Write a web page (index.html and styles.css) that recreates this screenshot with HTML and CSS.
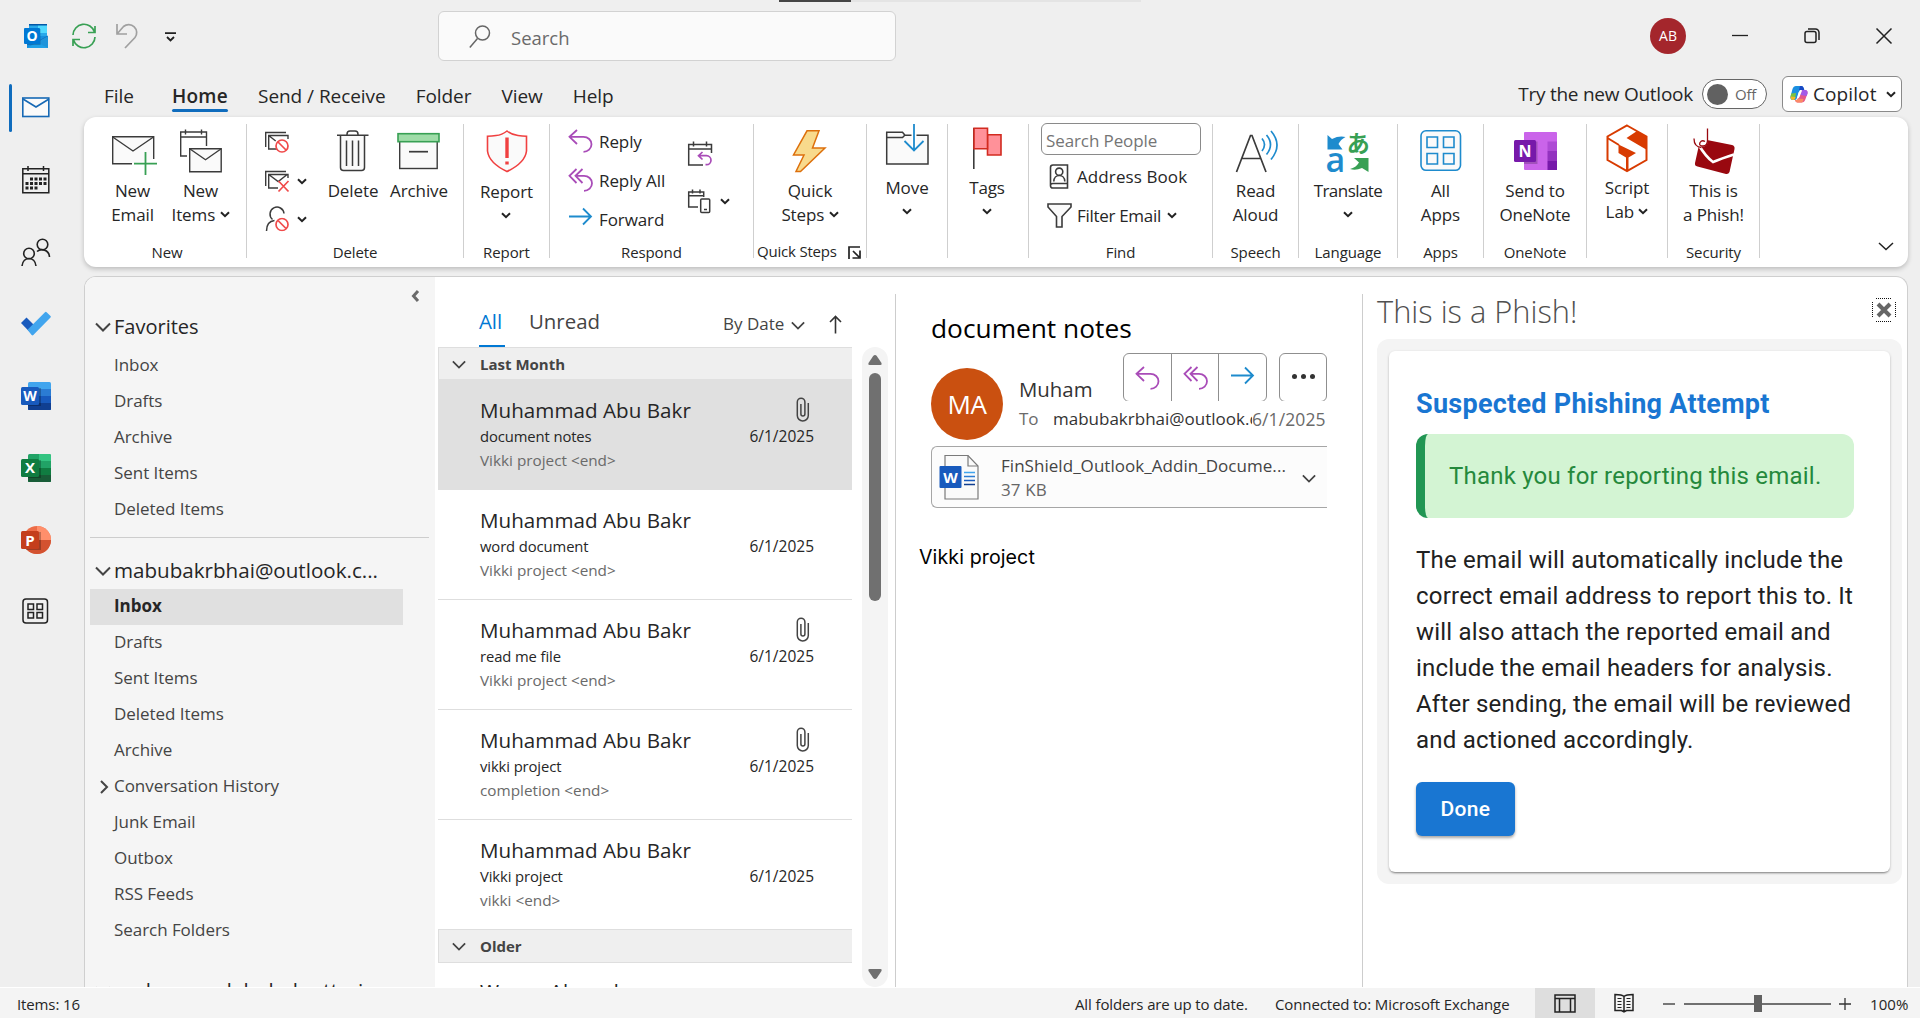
FILE: index.html
```html
<!DOCTYPE html>
<html lang="en">
<head>
<meta charset="utf-8">
<title>Inbox - Outlook</title>
<link rel="stylesheet" href="styles.css">
</head>
<body>
<svg class="defs" aria-hidden="true">
  <symbol id="chev" viewBox="0 0 10 7"><path d="M1 1.2l4 4 4-4" fill="none" stroke="currentColor" stroke-width="2"/></symbol>
  <symbol id="chev-lg" viewBox="0 0 16 10"><path d="M1 1.5l7 7 7-7" fill="none" stroke="currentColor" stroke-width="2"/></symbol>
  <symbol id="clip" viewBox="0 0 14 26"><path d="M12.3 6v12.500a5.500 5.500 0 0 1-11 0V5a3.800 3.800 0 0 1 7.600 0v12a2 2 0 0 1-4 0V7" fill="none" stroke="#444" stroke-width="1.500"/></symbol>
  <symbol id="reply" viewBox="0 0 26 24"><path d="M9 1L1.500 7.800 9 15M1.500 7.800H15.500a8 7.500 0 0 1 0 15" fill="none" stroke="#a94cb8" stroke-width="1.800"/></symbol>
  <symbol id="reply-all" viewBox="0 0 26 24"><path d="M8.500 1L1.500 7.800 8.500 15M14.500 1L7.500 7.800l7 7.200M7.500 7.800h8.500a8 7.500 0 0 1 0 15" fill="none" stroke="#a94cb8" stroke-width="1.800"/></symbol>
  <symbol id="forward" viewBox="0 0 26 24"><path d="M1 9.500h22M15 1.500l8 8-8 8" fill="none" stroke="#1e8bcd" stroke-width="1.800"/></symbol>
  <symbol id="block" viewBox="0 0 14 14"><circle cx="7" cy="7" r="6" fill="#fff" stroke="#f04a4a" stroke-width="1.700"/><path d="M3 3l8 8" stroke="#f04a4a" stroke-width="1.700"/></symbol>
</svg>

<header class="titlebar">
  <div class="quick">
    <svg class="qi-outlook" width="24" height="24" viewBox="0 0 24 24"><rect x="5" y="0" width="18" height="14" fill="#28a8ea"/><rect x="14" y="1" width="9" height="8" fill="#50d9ff"/><rect x="5" y="0" width="18" height="1.500" fill="#0358a7"/><path d="M3 12h21v12H3z" fill="#1490df"/><path d="M24 11.500L12.500 18 24 24z" fill="#1066b5"/><path d="M3 24l21-12v12z" fill="#28a8ea" opacity=".7"/><rect x="3" y="5" width="13.500" height="16" fill="#0a3d6e" opacity=".35"/><rect y="4" width="16" height="16" rx="1" fill="#0078d4"/><text x="8" y="17" text-anchor="middle" class="logo-letter" font-size="14">O</text></svg>
    <svg class="qi-sync" width="26" height="26" viewBox="0 0 26 26" fill="none" stroke="#38a054" stroke-width="1.700"><path d="M2 12A11 11 0 0 1 23.500 9M24 14A11 11 0 0 1 2.500 17M24 3v6.500h-7M2 23v-6.500h7"/></svg>
    <svg class="qi-undo" width="24" height="26" viewBox="0 0 24 26" fill="none" stroke="#a0a0a0" stroke-width="1.700"><path d="M2 1v10h10M2 11L8.500 3.500A8 8 0 0 1 20 14.500L10 25"/></svg>
    <svg class="qi-more" width="12" height="11" viewBox="0 0 12 11" fill="none" stroke="#222" stroke-width="1.800"><path d="M0 1.200h11M2 5l3.500 3.500L9 5"/></svg>
  </div>
  <div class="searchbox">
    <svg width="22" height="24" viewBox="0 0 22 24" fill="none" stroke="#666" stroke-width="1.500"><circle cx="13.500" cy="8" r="7"/><path d="M8.500 13.500L.8 22.500"/></svg>
    <span>Search</span>
  </div>
  <div class="top-edge"><i></i><b></b></div>
  <div class="window-controls">
    <span class="account">AB</span>
    <svg width="16" height="16" viewBox="0 0 16 16" fill="none" stroke="#222" stroke-width="1.300"><path d="M0 7.500h16"/></svg>
    <svg width="16" height="16" viewBox="0 0 16 16" fill="none" stroke="#222" stroke-width="1.500"><rect x="1" y="3.500" width="11" height="11" rx="2"/><path d="M4 1h7.500a3.500 3.500 0 0 1 3.500 3.500v7.500"/></svg>
    <svg width="16" height="16" viewBox="0 0 16 16" fill="none" stroke="#222" stroke-width="1.500"><path d="M.5.5l15 15M15.500.5l-15 15"/></svg>
  </div>
</header>

<div class="shell">
  <nav class="rail">
    <span class="rail-item active"><svg width="30" height="24" viewBox="0 0 30 24" fill="none" stroke="#1769b5" stroke-width="1.600"><rect x="1.800" y="2" width="26" height="18.500" fill="#fafafa"/><path d="M2 3l13 8 13-8"/></svg></span>
    <span class="rail-item"><svg width="30" height="28" viewBox="0 0 30 28" fill="none" stroke="#222" stroke-width="1.500"><path d="M1.800 2.800h26v24h-26zM1.800 7.800h26M7 0v5M22.500 0v5"/><path d="M9 13h18M4.500 17.500H27M4.500 22H18" stroke-width="3" stroke-dasharray="3 1.500"/></svg></span>
    <span class="rail-item"><svg width="30" height="30" viewBox="0 0 30 30" fill="none" stroke="#222" stroke-width="1.600"><circle cx="21.500" cy="7.500" r="5.300"/><circle cx="8" cy="16.500" r="5.300"/><path d="M1 29c1-10 13-10 14 0M16 14.500c4-3.500 12-2 12.500 5.500"/></svg></span>
    <span class="rail-item"><svg width="30" height="26" viewBox="0 0 30 26"><path d="M0 12l5.500-5.500L17 18l-5.500 6z" fill="#185abd"/><path d="M6.500 18.800L24 1.200q.8-.8 1.600 0L29.500 5q.8.800 0 1.600L12.300 24q-.8.800-1.600 0z" fill="#41a5ee"/></svg></span>
    <span class="rail-item"><svg width="30" height="28" viewBox="0 0 30 28"><rect x="7" width="23" height="28" rx="1.500" fill="#41a5ee"/><path d="M7 7h23v19.500q0 1.500-1.500 1.500H8.500Q7 28 7 26.500z" fill="#2b7cd3"/><path d="M7 14h23v12.500q0 1.500-1.500 1.500H8.500Q7 28 7 26.500z" fill="#185abd"/><path d="M7 21h23v5.500q0 1.500-1.500 1.500H8.500Q7 28 7 26.500z" fill="#103f91"/><rect x="7" y="6" width="13" height="18" fill="#000" opacity=".25"/><rect y="5" width="18" height="18" rx="1.500" fill="#185abd"/><text x="9" y="19" text-anchor="middle" class="logo-letter" font-size="14">W</text></svg></span>
    <span class="rail-item"><svg width="30" height="28" viewBox="0 0 30 28"><rect x="7" width="23" height="28" rx="1.500" fill="#21a366"/><path d="M18 0h10.500Q30 0 30 1.500V7H18z" fill="#33c481"/><path d="M7 14h23v12.500q0 1.500-1.500 1.500H8.500Q7 28 7 26.500z" fill="#107c41"/><path d="M7 21h23v5.500q0 1.500-1.500 1.500H8.500Q7 28 7 26.500z" fill="#185c37"/><rect x="7" y="6" width="13" height="18" fill="#000" opacity=".25"/><rect y="5" width="18" height="18" rx="1.500" fill="#107c41"/><text x="9" y="19" text-anchor="middle" class="logo-letter" font-size="15">X</text></svg></span>
    <span class="rail-item"><svg width="30" height="28" viewBox="0 0 30 28"><circle cx="16" cy="14" r="14" fill="#ed6c47"/><path d="M16 0a14 14 0 0 1 14 14H16z" fill="#ff8f6b"/><path d="M30 14a14 14 0 0 1-28 0z" fill="#d35230"/><rect x="5" y="6" width="15" height="18" fill="#000" opacity=".25"/><rect y="5" width="18" height="18" rx="1.500" fill="#c43e1c"/><text x="9" y="19.500" text-anchor="middle" class="logo-letter" font-size="15">P</text></svg></span>
    <span class="rail-item"><svg width="30" height="28" viewBox="0 0 30 28" fill="none" stroke="#222" stroke-width="1.500"><rect x="2" y="2" width="24.500" height="24" rx="3"/><path d="M7 7h5.500v5.500H7zM16 7h5.500v5.500H16zM7 15.500h5.500V21H7zM16 15.500h5.500V21H16z"/></svg></span>
  </nav>

  <div class="workspace">
    <div class="tabs">
      <span>File</span><span class="current">Home</span><span>Send / Receive</span><span>Folder</span><span>View</span><span>Help</span>
      <div class="tabs-right">
        <span class="try">Try the new Outlook</span>
        <span class="toggle"><i></i>Off</span>
        <button class="copilot"><svg width="18" height="18" viewBox="0 0 18 18"><path d="M6 1h5q2 0 2.600 2l.6 2H10L6.500 14Q6 15 4.500 15H3Q0 15 .5 11.500L2.500 4Q3.500 1 6 1z" fill="#1b8fe0"/><path d="M10 1h1.500q1.700 0 2.200 2l.6 2H9z" fill="#1748c4"/><path d="M1.200 8.500L6 8l-1 6.500Q2 15.500.8 13.500.2 12 1.200 8.500z" fill="#7cc240"/><path d="M.6 11.500l5 .5q-.6 3-2 3Q.5 15.500.6 11.500z" fill="#f2b728"/><path d="M12 5h3q3 0 2.500 3.500L15.500 14q-1 3.500-4 3.500H7.500q-2 0-2.500-2.500h1.500q1 0 1.500-1.500z" fill="#e6578a"/><path d="M12 5h3q3 0 2.500 3.500l-.8 2.500-6.200-1z" fill="#a35ae8"/><path d="M7.500 13.500l6 .5q-.5 3.500-2 3.500h-4q-1.500 0-2.500-2.500h1.500q.6 0 1-1.500z" fill="#fb8a66"/><path d="M8.500 7.500l1.500-2h2l-2.500 6.500-1.500 1.500-1-.5z" fill="#fff"/></svg>Copilot<svg class="cv" width="10" height="7"><use href="#chev"/></svg></button>
      </div>
    </div>

    <section class="ribbon">
      <div class="group g-new">
        <div class="tools">
          <div class="big"><svg width="48" height="54" viewBox="0 0 48 54" fill="none" stroke="#3b3b3b" stroke-width="1.400"><path d="M23 39.700H3.700V12.700h41V35" fill="#fafafa"/><path d="M3.700 13L24 27l20.500-14"/><path d="M36.500 28v23M25 39.700h23" stroke="#38a054" stroke-width="1.800"/></svg><span>New<br>Email</span></div>
          <div class="big"><svg width="48" height="54" viewBox="0 0 48 54" fill="none" stroke="#3b3b3b" stroke-width="1.400"><path d="M10 32H3.700V8H29.500V22M3.700 13H29.500M8.500 5.500v5M24.500 5.500v5"/><path d="M12.700 24.700h31.500v23H12.700z" fill="#fafafa"/><path d="M12.700 24.700l15.800 11 15.700-11"/></svg><span>New<br>Items <svg class="cv" width="10" height="7"><use href="#chev"/></svg></span></div>
        </div>
        <div class="caption">New</div>
      </div>
      <div class="group g-delete">
        <div class="tools">
          <div class="minis">
            <div><svg width="26" height="24" viewBox="0 0 26 24" fill="none" stroke="#3b3b3b" stroke-width="1.400"><path d="M1.700 17V2.500H22M13 19H4.700V5.500H24V9M4.700 5.500l7 5.500"/><use href="#block" x="11" y="9" width="14" height="14"/></svg></div>
            <div><svg width="26" height="24" viewBox="0 0 26 24" fill="none" stroke="#3b3b3b" stroke-width="1.400"><path d="M1.700 17V2.500H22M14 19H4.700V5.500H24V9M4.700 5.500l9.500 7 9-7"/><path d="M14.500 12l10 10.500M24.500 12l-10 10.500" stroke="#f04a4a" stroke-width="1.700"/></svg><svg class="cv" width="10" height="7"><use href="#chev"/></svg></div>
            <div><svg width="26" height="24" viewBox="0 0 26 24" fill="none" stroke="#3b3b3b" stroke-width="1.500"><path d="M8.500 12.500A7 7 0 1 1 20 6.500M2.500 24C2.500 16.500 6 14 10.500 13.500"/><use href="#block" x="11" y="10.500" width="14" height="14"/></svg><svg class="cv" width="10" height="7"><use href="#chev"/></svg></div>
          </div>
          <div class="big"><svg width="48" height="54" viewBox="0 0 48 54" fill="none" stroke="#3b3b3b" stroke-width="1.500"><path d="M11.500 11.500v32a3 3 0 0 0 3 3h18a3 3 0 0 0 3-3v-32" fill="#fafafa"/><path d="M8 11.200h31.500M18 11v-.8q0-3.200 3-3.200h5q3 0 3 3.200v.8M17.500 16.500V42M23.500 16.500V42M29.500 16.500V42"/></svg><span>Delete</span></div>
          <div class="big"><svg width="48" height="54" viewBox="0 0 48 54" fill="none" stroke="#3b3b3b" stroke-width="1.400"><rect x="4.700" y="17" width="37.500" height="27.500" fill="#fafafa"/><rect x="3" y="9.700" width="41" height="8" fill="#9fdca8" stroke="#38a054" stroke-width="1.600"/><path d="M14 27.700h19" stroke-width="1.700"/></svg><span>Archive</span></div>
        </div>
        <div class="caption">Delete</div>
      </div>
      <div class="group g-report">
        <div class="tools">
          <div class="big"><svg width="48" height="54" viewBox="0 0 48 54" fill="none" stroke="#f04040" stroke-width="1.600"><path d="M24 7q-5 4-11 4.500-4 .5-8.500.8V27Q6 39 24 47.500 42 39 43.500 27V12.300q-4.500-.3-8.500-.8Q29 11 24 7z" fill="#fafafa"/><path d="M24 13.500V34M24 37.500v3" stroke-width="3.400"/></svg><span class="low">Report<br><svg class="cv" width="10" height="7"><use href="#chev"/></svg></span></div>
        </div>
        <div class="caption">Report</div>
      </div>
      <div class="group g-respond">
        <div class="tools">
          <div class="rows">
            <div><svg width="26" height="24"><use href="#reply"/></svg>Reply</div>
            <div><svg width="26" height="24"><use href="#reply-all"/></svg>Reply All</div>
            <div><svg width="26" height="24"><use href="#forward"/></svg>Forward</div>
          </div>
          <div class="respond-side">
            <div><svg width="26" height="26" viewBox="0 0 26 26" fill="none" stroke="#3b3b3b" stroke-width="1.500"><path d="M16 24H1.700V3.500H24.500V12M1.700 8H24.500M6.500.5v5M19.500.5v5" /><path d="M15.500 11l-4 3.700 4 3.800M11.500 14.700h8a4.500 4.500 0 0 1 0 9h-1" stroke="#a94cb8" stroke-width="1.700"/></svg></div>
            <div><svg width="26" height="26" viewBox="0 0 26 26" fill="none" stroke="#3b3b3b" stroke-width="1.500"><path d="M11 18H1.700V3H16.700V8M1.700 6.700H16.700M5.500.5v4M13 .5v4"/><rect x="13.700" y="10" width="9" height="13.500" rx="1"/><path d="M17 20.500h3"/></svg><svg class="cv" width="10" height="7"><use href="#chev"/></svg></div>
          </div>
        </div>
        <div class="caption">Respond</div>
      </div>
      <div class="group g-quick">
        <div class="tools">
          <div class="big"><svg width="48" height="54" viewBox="0 0 48 54"><path d="M21 6.800h12L26.500 24H39L14.500 47.500H10L18 31H7.500z" fill="#f8da8c" stroke="#dd700c" stroke-width="1.500"/></svg><span>Quick<br>Steps <svg class="cv" width="10" height="7"><use href="#chev"/></svg></span></div>
        </div>
        <div class="caption">Quick Steps<svg class="launcher" width="13" height="13" viewBox="0 0 13 13" fill="none" stroke="#222" stroke-width="1.700"><path d="M1 13V1h11M5 5l6 6M12 4.500V12H4.500"/></svg></div>
      </div>
      <div class="group g-move">
        <div class="tools">
          <div class="big up"><svg width="48" height="54" viewBox="0 0 48 54" fill="none" stroke="#3b3b3b" stroke-width="1.500"><path d="M3.700 40V8.200H19.500L22 11.200H45V40z" fill="#fafafa"/><path d="M3.700 13.500H19.500L22 11"/><path d="M31 0v27" stroke="#fff" stroke-width="5"/><path d="M31 0v26.500M21.500 17l9.500 9.500 9.500-9.500" stroke="#1e8bcd" stroke-width="1.800"/></svg><span>Move<br><svg class="cv" width="10" height="7"><use href="#chev"/></svg></span></div>
        </div>
      </div>
      <div class="group g-tags">
        <div class="tools">
          <div class="big up"><svg width="48" height="54" viewBox="0 0 48 54"><path d="M10.800 4v41" stroke="#3b3b3b" stroke-width="1.600"/><path d="M24.500 10.700H38V31H24.500z" fill="#ff9199" stroke="#d22b20" stroke-width="1.600"/><path d="M11 4.200h13.500v20.500H11z" fill="#ff9199" stroke="#d22b20" stroke-width="1.600"/></svg><span>Tags<br><svg class="cv" width="10" height="7"><use href="#chev"/></svg></span></div>
        </div>
      </div>
      <div class="group g-find">
        <div class="people">Search People</div>
        <div class="rows find-rows">
          <div><svg width="26" height="26" viewBox="0 0 26 26" fill="none" stroke="#3b3b3b" stroke-width="1.600"><path d="M20.500 19.500v4.500H6q-2.500 0-2.500-2.300V3.500Q3.500 1 6 1h14.500v18.500H6q-2.500 0-2.500 2"/><circle cx="12.200" cy="7.700" r="3.600"/><path d="M6.800 17.500c0-8 11-8 11 0"/></svg>Address Book</div>
          <div><svg width="26" height="26" viewBox="0 0 26 26" fill="#fafafa" stroke="#3b3b3b" stroke-width="1.600"><path d="M1 1h23v3l-9 9.500V24H9.500V13.500L1 4z"/></svg>Filter Email<svg class="cv" width="10" height="7"><use href="#chev"/></svg></div>
        </div>
        <div class="caption">Find</div>
      </div>
      <div class="group g-speech">
        <div class="tools">
          <div class="big"><svg width="48" height="54" viewBox="0 0 48 54" fill="none" stroke="#3b3b3b" stroke-width="1.700"><path d="M4.500 48L18.500 11.500h1.500L34 48M9.500 34.500H29"/><path d="M30 14.500q5 6 0 12.500M34.500 11q8 9.500 0 19.500M39 7q12 14 0 28.500" stroke="#1e8bcd"/></svg><span>Read<br>Aloud</span></div>
        </div>
        <div class="caption">Speech</div>
      </div>
      <div class="group g-lang">
        <div class="tools">
          <div class="big"><svg width="48" height="54" viewBox="0 0 48 54"><path d="M3.500 11L8 15q7-3.500 13.500-2-5 2.500-7 7l4 5.500H3.500z" fill="#1e8bcd"/><path d="M44.500 48V34H30l5 4.500q-3 5-9 6.500 5.500 2 12-1z" fill="#38a054"/><text x="11" y="47.500" text-anchor="middle" class="tr-a">a</text><text x="34" y="28" text-anchor="middle" class="tr-ja">あ</text></svg><span>Translate<br><svg class="cv" width="10" height="7"><use href="#chev"/></svg></span></div>
        </div>
        <div class="caption">Language</div>
      </div>
      <div class="group g-apps">
        <div class="tools">
          <div class="big"><svg width="48" height="54" viewBox="0 0 48 54" fill="#fafafa" stroke="#1e8bcd" stroke-width="1.600"><rect x="4" y="6.800" width="39.500" height="39.500" rx="5"/><path d="M10 13h10.500v10.500H10zM26.500 13H37v10.500H26.500zM10 29.500h10.500V40H10zM26.500 29.500H37V40H26.500z"/></svg><span>All<br>Apps</span></div>
        </div>
        <div class="caption">Apps</div>
      </div>
      <div class="group g-onenote">
        <div class="tools">
          <div class="big"><svg width="48" height="54" viewBox="0 0 48 54"><rect x="13" y="8" width="33" height="38" rx="1" fill="#ca64ea"/><path d="M36.500 17.500H46v9.500h-9.500z" fill="#ae4bd5"/><path d="M36.500 27H46v10h-9.500z" fill="#9332bf"/><path d="M36.500 37H46v9h-9.500z" fill="#7719aa"/><rect x="13" y="17.500" width="13.500" height="22.500" fill="#000" opacity=".2"/><rect x="3" y="16" width="22" height="22" rx="1.500" fill="#7719aa"/><text x="14" y="32.500" text-anchor="middle" class="logo-letter" font-size="16">N</text></svg><span>Send to<br>OneNote</span></div>
        </div>
        <div class="caption">OneNote</div>
      </div>
      <div class="group g-script">
        <div class="tools">
          <div class="big up"><svg width="48" height="54" viewBox="0 0 48 54" fill="#d83b01"><path d="M24 1.500L43.500 12.500v23.500L24 47 4.500 36V12.500z" fill="#fff" stroke="#d83b01" stroke-width="2"/><path d="M34 7L44 12.500V26L23.500 14zM15.500 20.500v8.500l7.500 4.500V47h2.500V33.500l7.500-4.500z"/><path d="M4.500 14L16 21" stroke="#d83b01" stroke-width="2"/></svg><span>Script<br>Lab <svg class="cv" width="10" height="7"><use href="#chev"/></svg></span></div>
        </div>
      </div>
      <div class="group g-security">
        <div class="tools">
          <div class="big"><svg width="48" height="54" viewBox="0 0 48 54"><path d="M17 16L42 21q3 .8 2.500 4L39.500 48q-1 2.500-3.500 2L7.500 42.500Q4.500 42 5 39L9 21z" fill="#99080f"/><path d="M8.500 20.500q7 12 14.500 17.500 7-3 21-7.500" fill="none" stroke="#fff" stroke-width="2.600"/><circle cx="13" cy="18" r="4.500" fill="#fff"/><path d="M17.500 4.500V16q0 6-4.500 6t-3-3.500q2-3 5-1M4 14.500q0 8.500 7.500 9" fill="none" stroke="#99080f" stroke-width="1.300"/></svg><span>This is<br>a Phish!</span></div>
        </div>
        <div class="caption">Security</div>
      </div>
      <svg class="collapse" width="16" height="9" viewBox="0 0 16 9" fill="none" stroke="#222" stroke-width="1.500"><path d="M1 1l7 6.500L15 1"/></svg>
    </section>

    <main class="panes">
      <aside class="folders">
        <svg class="fold" width="8" height="12" viewBox="0 0 8 12" fill="none" stroke="#6a6a6a" stroke-width="3"><path d="M7 1L2.500 6 7 11"/></svg>
        <h2><svg width="16" height="10"><use href="#chev-lg"/></svg>Favorites</h2>
        <ul><li>Inbox</li><li>Drafts</li><li>Archive</li><li>Sent Items</li><li>Deleted Items</li></ul>
        <hr>
        <h2 class="acct"><svg width="16" height="10"><use href="#chev-lg"/></svg>mabubakrbhai@outlook.c...</h2>
        <ul><li class="sel">Inbox</li><li>Drafts</li><li>Sent Items</li><li>Deleted Items</li><li>Archive</li><li><svg class="side-chev" width="9" height="14" viewBox="0 0 9 14" fill="none" stroke="#444" stroke-width="2"><path d="M1 1l6 6-6 6"/></svg>Conversation History</li><li>Junk Email</li><li>Outbox</li><li>RSS Feeds</li><li>Search Folders</li></ul>
        <h2 class="acct next"><svg width="16" height="10"><use href="#chev-lg"/></svg>muhammadabubakrattari...</h2>
      </aside>

      <section class="list">
        <div class="list-head">
          <span class="f-all">All</span><span class="f-unread">Unread</span>
          <span class="sort">By Date<svg width="14" height="9" viewBox="0 0 16 10"><use href="#chev-lg"/></svg></span>
          <svg class="dir" width="13" height="19" viewBox="0 0 13 19" fill="none" stroke="#333" stroke-width="1.600"><path d="M6.500 18.500V1.500M1 7l5.500-5.500L12 7"/></svg>
        </div>
        <div class="list-body">
          <div class="msgs">
            <div class="divider-row"><svg width="14" height="9" viewBox="0 0 16 10"><use href="#chev-lg"/></svg>Last Month</div>
            <article class="msg chosen"><h3>Muhammad Abu Bakr</h3><svg width="14" height="26"><use href="#clip"/></svg><p>document notes</p><time>6/1/2025</time><small>Vikki project &lt;end&gt;</small></article>
            <article class="msg"><h3>Muhammad Abu Bakr</h3><p>word document</p><time>6/1/2025</time><small>Vikki project &lt;end&gt;</small></article>
            <article class="msg"><h3>Muhammad Abu Bakr</h3><svg width="14" height="26"><use href="#clip"/></svg><p>read me file</p><time>6/1/2025</time><small>Vikki project &lt;end&gt;</small></article>
            <article class="msg"><h3>Muhammad Abu Bakr</h3><svg width="14" height="26"><use href="#clip"/></svg><p>vikki project</p><time>6/1/2025</time><small>completion &lt;end&gt;</small></article>
            <article class="msg last"><h3>Muhammad Abu Bakr</h3><p>Vikki project</p><time>6/1/2025</time><small>vikki &lt;end&gt;</small></article>
            <div class="divider-row older"><svg width="14" height="9" viewBox="0 0 16 10"><use href="#chev-lg"/></svg>Older</div>
            <article class="msg partial"><h3>Waqas Ahmed</h3></article>
          </div>
          <div class="scroll"><svg width="14" height="10" viewBox="0 0 14 10"><path d="M7 0q1 0 1.800 1L13.500 8q.8 2-1 2h-11q-1.800 0-1-2L5.200 1Q6 0 7 0z" fill="#707070"/></svg><i></i><svg class="down" width="14" height="10" viewBox="0 0 14 10"><path d="M7 10q-1 0-1.800-1L.5 2q-.8-2 1-2h11q1.800 0 1 2L8.800 9Q8 10 7 10z" fill="#707070"/></svg></div>
        </div>
      </section>

      <section class="reading">
        <h1>document notes</h1>
        <div class="sender">
          <span class="avatar">MA</span>
          <div class="who">
            <div class="who-top">
              <span class="name">Muham</span>
              <span class="actions"><b><svg width="26" height="24"><use href="#reply"/></svg></b><b><svg width="26" height="24"><use href="#reply-all"/></svg></b><b><svg class="fw" width="26" height="24"><use href="#forward"/></svg></b></span>
              <span class="more"><i></i><i></i><i></i></span>
            </div>
            <div class="to"><span>To</span><em>mabubakrbhai@outlook.com</em><time>6/1/2025</time></div>
          </div>
        </div>
        <div class="attach">
          <svg width="40" height="46" viewBox="0 0 40 46"><path d="M6 1.500h23l10 10.500v33H6z" fill="#fafafa" stroke="#7a7a7a" stroke-width="1.200"/><path d="M29 1.500V12h10" fill="none" stroke="#7a7a7a" stroke-width="1.200"/><rect x=".5" y="12" width="22" height="22" rx="1" fill="#185abd"/><text x="11.500" y="28.500" text-anchor="middle" class="logo-letter" font-size="15">W</text><path d="M25 18.500h11" stroke="#41a5ee" stroke-width="1.300"/><path d="M25 22.500h11" stroke="#2b7cd3" stroke-width="1.300"/><path d="M25 26.500h11" stroke="#185abd" stroke-width="1.300"/><path d="M25 30.500h11" stroke="#103f91" stroke-width="1.300"/></svg>
          <div>FinShield_Outlook_Addin_Docume...<br><span>37 KB</span></div>
          <svg class="drop" width="14" height="9" viewBox="0 0 16 10"><use href="#chev-lg"/></svg>
        </div>
        <p class="body">Vikki project</p>
      </section>

      <aside class="addin">
        <header><span>This is a Phish!</span><svg width="24" height="24" viewBox="0 0 24 24" fill="none"><path d="M4 .5h16M4 23.500h16M.5 4v16M23.500 4v16" stroke="#111" stroke-dasharray="1 1"/><path d="M6 6l12 12M18 6L6 18" stroke="#666" stroke-width="4"/></svg></header>
        <div class="frame">
          <div class="card">
            <h4>Suspected Phishing Attempt</h4>
            <div class="thanks">Thank you for reporting this email.</div>
            <p>The email will automatically include the<br>correct email address to report this to. It<br>will also attach the reported email and<br>include the email headers for analysis.<br>After sending, the email will be reviewed<br>and actioned accordingly.</p>
            <button>Done</button>
          </div>
        </div>
      </aside>
    </main>
  </div>
</div>

<footer class="status">
  <span class="items">Items: 16</span>
  <span class="uptodate">All folders are up to date.</span>
  <span class="conn">Connected to: Microsoft Exchange</span>
  <span class="view"><svg width="22" height="19" viewBox="0 0 22 19" fill="none" stroke="#222" stroke-width="1.500"><path d="M1 1h20v17H1zM1 4.500h20M5.500 4.500V18M16.500 4.500V18"/></svg></span>
  <svg class="book" width="20" height="20" viewBox="0 0 20 20" fill="none" stroke="#222" stroke-width="1.500"><path d="M10 3.500Q8 1.500 1 1.500v16h6.500L10 19l2.500-1.500H19v-16q-7 0-9 2zM10 3.500V19"/><path d="M3.500 5.500h4M3.500 8.500h4M3.500 11.500h4M3.500 14.500h4M12.500 5.500h4M12.500 8.500h4M12.500 11.500h4M12.500 14.500h4" stroke-width="1.200"/></svg>
  <svg class="minus" width="12" height="12" viewBox="0 0 12 12" stroke="#333" stroke-width="1.300"><path d="M0 6h12"/></svg>
  <span class="zoom"><i></i></span>
  <svg class="plus" width="12" height="12" viewBox="0 0 12 12" stroke="#333" stroke-width="1.300"><path d="M0 6h12M6 0v12"/></svg>
  <span class="pct">100%</span>
</footer>
</body>
</html>
```
FILE: styles.css
```css
* { box-sizing: border-box; }
body {
  margin: 0; width: 1920px; height: 1018px; overflow: hidden;
  display: flex; flex-direction: column;
  background: #efefef; color: #262626;
  font: 17px/24px "Open Sans", "Noto Sans CJK JP", sans-serif;
}
svg { display: block; flex: none; overflow: visible; }
.defs { position: absolute; width: 0; height: 0; }
h1, h2, h3, h4, p, ul { margin: 0; padding: 0; font-weight: 400; list-style: none; }
.cv { display: inline-block; color: #222; }
.logo-letter { font-family: "Open Sans", sans-serif; font-weight: 700; fill: #fff; stroke: none; }

/* title bar */
.titlebar { height: 72px; flex: none; display: flex; align-items: flex-start; position: relative; }
.quick { width: 438px; display: flex; padding: 23px 0 0 24px; }
.qi-outlook { margin-top: 1px; }
.qi-sync { margin-left: 23px; }
.qi-undo { margin-left: 18px; }
.qi-more { margin: 9px 0 0 26px; }
.searchbox {
  width: 458px; height: 50px; margin-top: 11px; padding: 0 0 0 30px;
  display: flex; align-items: center; gap: 20px;
  background: #fafafa; border: 1px solid #d2d2d2; border-radius: 6px;
  font-size: 18.500px; color: #6a6a6a;
}
.searchbox svg { margin-top: 2px; }
.searchbox span { padding-top: 3px; }
.top-edge { position: absolute; left: 779px; top: 0; display: flex; height: 2px; }
.top-edge i { width: 72px; background: #454545; }
.top-edge b { width: 290px; background: #e4e4e4; }
.window-controls { margin: 18px 28px 0 auto; display: flex; align-items: center; gap: 56px; }
.account {
  width: 36px; height: 36px; margin-right: -10px; border-radius: 50%;
  background: #a4262c; color: #fff; font-size: 14px; line-height: 36px; text-align: center;
}

.shell { height: 915px; display: flex; }

/* app rail */
.rail { width: 84px; display: grid; grid-template-rows: repeat(8, 72px); padding-left: 21px; flex: none; }
.rail-item { display: flex; align-items: center; position: relative; }
.rail-item:last-child { padding-bottom: 2px; }
.active::before { content: ""; position: absolute; left: -12px; top: 12px; width: 3px; height: 48px; border-radius: 2px; background: #0f6cbd; }

.workspace { width: 1836px; display: flex; flex-direction: column; }

/* tab strip */
.tabs { height: 45px; flex: none; display: flex; padding-left: 20px; font-size: 19px; line-height: 48px; letter-spacing: -.05px; }
.tabs > span { margin-right: 30px; }
.tabs > span:nth-child(2) { margin-left: 8px; }
.tabs > span:nth-child(5) { margin-right: 30px; }
.current { font-weight: 600; position: relative; letter-spacing: .3px; }
.current::after { content: ""; position: absolute; left: 0; right: 0; top: 37px; height: 3px; border-radius: 2px; background: #0f6cbd; }
.tabs-right { margin-left: auto; display: flex; padding-right: 18px; line-height: 45px; }
.try { letter-spacing: -.25px; }
.toggle {
  width: 65px; height: 30px; margin: 7px 15px 0 9px; padding-left: 4px;
  display: flex; align-items: center; gap: 7px; border: 1px solid #666; border-radius: 16px;
  background: #fff; color: #666; font-size: 15px; line-height: 20px; letter-spacing: -.2px;
}
.toggle i { width: 21px; height: 21px; border-radius: 50%; background: #616161; }
.copilot {
  width: 120px; height: 36px; margin-top: 4px; padding: 0 0 0 7px; display: flex; align-items: center;
  border: 1px solid #8a8a8a; border-radius: 6px; background: #fff; color: #262626;
  font: 19px "Open Sans", sans-serif; letter-spacing: .1px;
}
.copilot > svg:first-child { margin-right: 5px; }
.copilot .cv { margin-left: 9px; }

/* ribbon */
.ribbon {
  width: 1824px; height: 150px; flex: none; display: flex; padding-top: 7px; position: relative; z-index: 1;
  background: #fff; border-radius: 12px; box-shadow: 0 2px 5px rgba(0,0,0,.22);
}
.group { height: 142px; flex: none; position: relative; display: flex; flex-direction: column; }
.group::after { content: ""; position: absolute; right: 0; top: 0; width: 1px; height: 134px; background: #cfcfcf; }
.tools { display: flex; height: 117px; justify-content: center; padding-right: 1px; }
.caption { font-size: 15px; line-height: 22px; text-align: center; letter-spacing: -.1px; padding-right: 1px; }
.big { width: 68px; display: flex; flex-direction: column; align-items: center; text-align: center; white-space: nowrap; letter-spacing: -.1px; }
.big span { margin-top: 1px; }
.big span .cv { margin: 0 0 3px 2px; }
.big br + .cv { margin-left: 0; }
.big.up span { margin-top: -2px; }
.big .low { margin-top: 2px; }
.g-new { width: 163px; }
.g-new .tools { padding: 0 0 0 2px; }
.g-new .caption { padding: 0 0 0 3px; }
.g-delete { width: 217px; }
.g-delete .tools { justify-content: flex-start; padding-left: 17px; }
.g-delete .big:nth-child(2) { margin-left: 15px; width: 60px; }
.g-delete .big:nth-child(3) { margin-left: 0; width: 72px; }
.minis { width: 44px; padding-top: 6px; display: grid; grid-template-rows: repeat(3, 38.500px); }
.minis div { display: flex; gap: 7px; }
.minis .cv { margin-top: 9px; }
.g-report { width: 86px; }
.g-respond { width: 204px; }
.g-respond .tools { justify-content: flex-start; padding-left: 18px; }
.g-respond .caption { text-align: left; padding-left: 71px; }
.rows { display: grid; grid-template-rows: repeat(3, 39px); padding-top: 6px; width: 119px; letter-spacing: -.1px; white-space: nowrap; }
.rows > div { display: flex; gap: 5px; }
.rows > div > svg:first-child { margin-top: -1px; }
.respond-side { padding-top: 17px; display: grid; grid-template-rows: 48px 30px; }
.respond-side > div { display: flex; gap: 7px; }
.respond-side .cv { margin-top: 9px; }
.g-quick { width: 113px; }
.g-quick .caption { display: flex; padding-left: 3px; letter-spacing: -.2px; line-height: 21px; }
.launcher { margin: 5px 0 0 11px; }
.g-move, .g-tags { width: 81px; }
.g-tags .tools { padding-right: 3px; }
.g-find { width: 184px; }
.people {
  width: 160px; height: 32px; margin: -1px 0 0 12px; padding-left: 4px; border: 1px solid #8a8a8a; border-radius: 6px;
  color: #757575; line-height: 34px; letter-spacing: -.1px; flex: none;
}
.find-rows { width: 170px; height: 86px; grid-template-rows: 39px 37px; padding: 10px 0 0 18px; letter-spacing: .1px; }
.find-rows > div { gap: 4px; }
.find-rows > div:nth-child(2) { letter-spacing: -.3px; }
.find-rows .cv { margin: 8px 0 0 2px; }
.g-speech { width: 86px; }
.g-lang { width: 99px; }
.g-lang .big { letter-spacing: -.55px; }
.g-apps { width: 86px; }
.g-onenote { width: 103px; }
.g-script { width: 81px; }
.g-security { width: 92px; }
.collapse { position: absolute; right: 14px; top: 125px; }
.tr-a { font: 600 34px "Open Sans", sans-serif; fill: #1e8bcd; }
.tr-ja { font: 700 23px "Noto Sans CJK JP", sans-serif; fill: #38a054; }

/* panes */
.panes {
  width: 1824px; height: 711px; margin-top: 9px; display: flex; flex: none; overflow: hidden;
  background: #fff; border: 1px solid #cfcfcf; border-bottom: 0; border-radius: 12px 12px 0 0;
}
.folders { width: 350px; flex: none; background: #f5f5f5; color: #444; position: relative; }
.fold { position: absolute; left: 326px; top: 13px; }
.folders h2 { display: flex; height: 42px; margin-top: 29px; padding-left: 10px; font-size: 20px; line-height: 41px; color: #262626; }
.folders h2 svg { margin: 16px 3px 0 0; color: #444; }
.folders li { height: 36px; padding-left: 29px; line-height: 34px; letter-spacing: -.05px; position: relative; }
.folders hr { margin: 9px 6px 0 5px; border: 0; height: 1px; background: #cdcdcd; }
.folders .acct { margin-top: 14px; height: 37px; font-size: 20.600px; line-height: 36px; }
.folders .acct svg { margin-top: 14px; }
.folders .next { margin-top: 23px; }
.folders .sel { margin: 0 32px 0 5px; padding-left: 24px; background: #e0e0e0; font-weight: 700; color: #262626; }
.side-chev { position: absolute; left: 15px; top: 11px; }

.list { width: 460px; flex: none; padding-left: 3px; display: flex; flex-direction: column; }
.list-head { height: 70px; display: flex; padding: 29px 0 0 41px; line-height: 31px; color: #444; }
.f-all { width: 26px; margin-right: 24px; height: 41px; font-size: 20.500px; color: #0078d4; border-bottom: 2px solid #0078d4; letter-spacing: -.1px; }
.f-unread { font-size: 20.400px; width: 194px; }
.sort { display: flex; gap: 7px; line-height: 35px; width: 108px; }
.sort svg { margin-top: 15px; }
.dir { margin-top: 9px; margin-left: -2px; }
.list-body { display: flex; height: 640px; flex: none; }
.msgs { width: 414px; overflow: hidden; flex: none; }
.divider-row {
  height: 32px; display: flex; align-items: center; gap: 14px; padding: 1px 0 0 13px; border: 1px solid #dedede; border-width: 1px 0 0 1px;
  background: #efefef; color: #444; font-weight: 700; font-size: 15px;
}
.older { height: 34px; border-bottom-width: 1px; padding-top: 0; }
.msg {
  height: 110px; padding: 19px 38px 0 42px; display: grid; grid-template-columns: 1fr auto; grid-template-rows: 25px 24px 24px;
  align-content: start; border-bottom: 1px solid #dedede; font-size: 14.800px; color: #262626;
}
.msg h3 { font-size: 20.600px; line-height: 23px; grid-column: 1; white-space: nowrap; letter-spacing: .03px; }
.msg svg { margin: -2px 4px 0 auto; }
.msg p { grid-column: 1; letter-spacing: -.1px; }
.msg time { font-size: 15.500px; }
.msg small { font-size: 15.300px; color: #6a6a6a; }
.msg.chosen { height: 111px; padding-top: 20px; background: #e0e0e0; border-bottom-color: #e0e0e0; }
.msg.last { height: 109px; border-bottom: 0; }
.msg.partial { padding-top: 17px; }
.scroll { width: 26px; height: 640px; margin-left: 10px; padding: 8px 0; border-radius: 13px; background: #f4f4f4; display: flex; flex-direction: column; align-items: center; }
.scroll i { width: 12px; height: 228px; margin-top: 8px; border-radius: 6px; background: #707070; }
.scroll .down { margin-top: auto; }

.reading { width: 468px; flex: none; margin-top: 17px; border: solid #cdcdcd; border-width: 0 1px; padding: 21px 35px 0 35px; }
.reading h1 { font-size: 26.300px; line-height: 36px; color: #000; margin-top: -5px; }
.sender { display: flex; height: 93px; margin-top: 7px; }
.avatar { width: 72px; height: 72px; margin: 15px 16px 0 0; flex: none; border-radius: 50%; background: #ca5010; color: #fff; font-size: 26px; line-height: 72px; text-align: center; letter-spacing: -.5px; }
.who { width: 308px; }
.who-top { display: flex; height: 48px; }
.name { width: 73px; overflow: hidden; font-size: 20.400px; line-height: 73px; margin-right: 31px; color: #333; }
.actions { display: flex; width: 144px; }
.actions, .more { height: 49px; border: 1px solid #8f8f8f; border-radius: 6px; clip-path: inset(0 0 1px 0); }
.actions b { flex: 1; padding: 12px 0 0 11px; }
.actions b + b { border-left: 1px solid #8f8f8f; }
.more { width: 48px; margin-left: 12px; padding-bottom: 2px; display: flex; gap: 4px; align-items: center; justify-content: center; }
.more i { width: 5px; height: 5px; border-radius: 50%; background: #333; }
.to { display: flex; line-height: 36px; color: #6a6a6a; white-space: nowrap; }
.to span { width: 34px; }
.to em { width: 199px; overflow: hidden; font-style: normal; color: #333; }
.to time { font-size: 17.500px; letter-spacing: .1px; }
.attach { width: 396px; height: 62px; display: flex; padding: 8px 0 0 8px; background: #fcfcfc; border: 1px solid #a6a6a6; border-right: 0; border-radius: 6px 0 0 6px; color: #444; white-space: nowrap; }
.attach > svg:first-child { margin: -1px 1px 0 -1px; }
.attach div { width: 301px; margin: -1px 0 0 21px; line-height: 24px; letter-spacing: .04px; }
.attach span { color: #666; letter-spacing: .1px; }
.attach .drop { margin-top: 19px; }
.body { margin: 37px 0 0 -12px; font: 19.600px/24px Inter, sans-serif; color: #000; letter-spacing: .1px; }

/* add-in */
.addin { flex: 1; padding: 8px 5px 0 14px; }
.addin header { display: flex; justify-content: space-between; height: 54px; padding-right: 6px; font-size: 30.800px; font-weight: 300; line-height: 53px; color: #505050; }
.addin header svg { margin-top: 13px; }
.frame { height: 545px; padding: 12px 12px 11px; background: #f4f4f4; border-radius: 12px; }
.card {
  height: 521px; padding: 33px 36px 0 27px; background: #fff; border-radius: 6px; color: #212121;
  box-shadow: 0 2px 2px -1px rgba(0,0,0,.35), 0 1px 3px rgba(0,0,0,.2);
  font: 24px/36px Roboto, sans-serif; letter-spacing: .21px; white-space: nowrap;
}
.card h4 { font-size: 27px; line-height: 40px; font-weight: 700; color: #1976d2; letter-spacing: .27px; }
.thanks { width: 438px; height: 84px; margin: 10px 0 24px; padding-left: 24px; line-height: 84px; background: #d3f4d3; color: #25893c; border-left: 9px solid #219653; border-radius: 12px; }
.card button {
  display: block; width: 99px; height: 54px; margin-top: 24px; border: 0; border-radius: 6px; background: #1976d2; color: #fff;
  font: 500 21px Roboto, sans-serif; letter-spacing: .3px; box-shadow: 0 2px 3px rgba(0,0,0,.35);
}

/* status bar */
.status { height: 31px; flex: none; display: flex; background: #f4f4f4; border-top: 1px solid #fff; font-size: 15px; line-height: 32px; letter-spacing: -.12px; white-space: nowrap; }
.items { width: 1075px; padding-left: 17px; }
.uptodate { width: 200px; }
.conn { width: 260px; }
.view { width: 60px; background: #dedede; padding: 6px 0 0 19px; }
.book { margin: 5px 0 0 19px; }
.minus { margin: 10px 9px 0 29px; }
.zoom { width: 147px; height: 2px; margin-top: 15px; background: #707070; }
.zoom i { display: block; width: 8px; height: 17px; margin: -8px 0 0 70px; background: #616161; }
.plus { margin: 10px 19px 0 8px; }
.pct { letter-spacing: .1px; }
```
